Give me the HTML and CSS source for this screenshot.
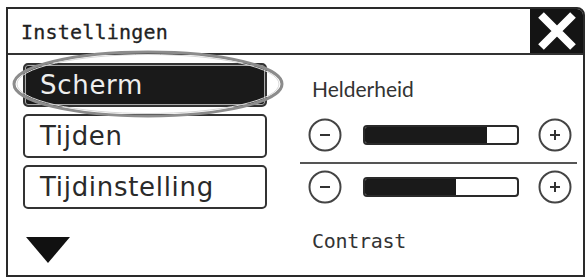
FILE: index.html
```html
<!DOCTYPE html>
<html lang="nl">
  <head>
    <meta charset="utf-8" />
    <title>Instellingen</title>
    <link rel="stylesheet" href="styles.css">
  </head>
  <body>
    <div class="frame">
      <header class="titlebar">
        <span class="title">Instellingen</span>
        <button class="close" aria-label="Sluiten">
          <svg width="40" height="38" viewBox="0 0 40 38">
            <path d="M4 3 L36 35 M36 3 L4 35" stroke="#fff" stroke-width="8" />
          </svg>
        </button>
      </header>
      <div class="content">
        <nav class="menu">
          <svg class="mark" width="284" height="78" viewBox="0 0 284 78">
            <ellipse cx="138" cy="36" rx="134" ry="32" fill="none" stroke="#8c8c8c" stroke-width="3" />
            <ellipse cx="138" cy="36" rx="131" ry="29.5" fill="none" stroke="#d8d8d8" stroke-width="1" />
          </svg>
          <a class="item active">Scherm</a>
          <a class="item">Tijden</a>
          <a class="item">Tijdinstelling</a>
          <span class="more"></span>
        </nav>
        <section class="panel">
          <div class="label">Helderheid</div>
          <div class="row">
            <svg class="round" width="34" height="34" viewBox="0 0 34 34">
              <circle cx="17" cy="17" r="15.5" fill="none" stroke="#444" stroke-width="2" />
              <path d="M12 17 H22" stroke="#333" stroke-width="2" />
            </svg>
            <div class="bar"><div class="fill" style="width: 80%"></div></div>
            <svg class="round" width="34" height="34" viewBox="0 0 34 34">
              <circle cx="17" cy="17" r="15.5" fill="none" stroke="#444" stroke-width="2" />
              <path d="M12 17 H22 M17 12 V22" stroke="#333" stroke-width="2" />
            </svg>
          </div>
          <hr class="sep" />
          <div class="row">
            <svg class="round" width="34" height="34" viewBox="0 0 34 34">
              <circle cx="17" cy="17" r="15.5" fill="none" stroke="#444" stroke-width="2" />
              <path d="M12 17 H22" stroke="#333" stroke-width="2" />
            </svg>
            <div class="bar"><div class="fill" style="width: 60%"></div></div>
            <svg class="round" width="34" height="34" viewBox="0 0 34 34">
              <circle cx="17" cy="17" r="15.5" fill="none" stroke="#444" stroke-width="2" />
              <path d="M12 17 H22 M17 12 V22" stroke="#333" stroke-width="2" />
            </svg>
          </div>
          <div class="label mono">Contrast</div>
        </section>
      </div>
    </div>
  </body>
</html>
```

FILE: styles.css
```css
html,
body {
  margin: 0;
  padding: 0;
  background: #fff;
  color: #222;
}
.frame {
  box-sizing: border-box;
  margin: 7px 0 0 6px;
  width: 579px;
  height: 270px;
  border: 2px solid #2a2a2a;
  border-top-right-radius: 8px;
  overflow: hidden;
  display: flex;
  flex-direction: column;
}
.titlebar {
  display: flex;
  align-items: center;
  height: 46px;
  border-bottom: 2px solid #333;
  box-sizing: border-box;
}
.title {
  padding: 2px 0 0 13px;
  font: 400 20px/1 "DejaVu Sans Mono", monospace;
  letter-spacing: 0.2px;
  color: #222;
  -webkit-text-stroke: 0.3px #222;
}
.close {
  margin-left: auto;
  width: 53px;
  height: 100%;
  border: 0;
  padding: 0;
  background: #141414;
  display: flex;
  align-items: center;
  justify-content: center;
}
.content {
  flex: 1;
  display: flex;
}
.menu {
  position: relative;
  width: 292px;
  box-sizing: border-box;
  padding: 8px 0 0 15px;
  display: flex;
  flex-direction: column;
  gap: 7px;
}
.mark {
  position: absolute;
  left: 2px;
  top: -7px;
  z-index: 1;
}
.item {
  box-sizing: border-box;
  width: 244px;
  height: 44px;
  border: 2px solid #333;
  border-radius: 5px;
  padding-left: 15px;
  display: flex;
  align-items: center;
  font: 400 26px/1 "DejaVu Sans", sans-serif;
  letter-spacing: 0.7px;
  color: #2a2a2a;
}
.item.active {
  background: #1a1a1a;
  color: #eee;
  box-shadow: inset 0 0 0 1px #aaa, inset 0 0 0 3px #1a1a1a;
}
.more {
  margin: 21px 0 0 3px;
  width: 0;
  height: 0;
  border-left: 22px solid transparent;
  border-right: 22px solid transparent;
  border-top: 26px solid #111;
}
.panel {
  flex: 1;
  margin-right: 6px;
  display: flex;
  flex-direction: column;
}
.label {
  padding: 23px 0 0 12px;
  height: 60px;
  box-sizing: border-box;
  font: 400 21px/1 Lato, sans-serif;
  color: #333;
}
.label.mono {
  padding-top: 24px;
  height: auto;
  font: 400 20px/1 "DejaVu Sans Mono", monospace;
  letter-spacing: -0.3px;
}
.row {
  display: flex;
  align-items: center;
  height: 40px;
  padding-left: 8px;
}
.bar {
  box-sizing: border-box;
  margin: 0 19px 0 21px;
  width: 156px;
  height: 20px;
  border: 2px solid #2a2a2a;
  border-radius: 4px;
  overflow: hidden;
}
.fill {
  height: 100%;
  background: #1a1a1a;
}
.sep {
  margin: 7px 0 3px;
  border: 0;
  height: 2px;
  background: #555;
}
```
